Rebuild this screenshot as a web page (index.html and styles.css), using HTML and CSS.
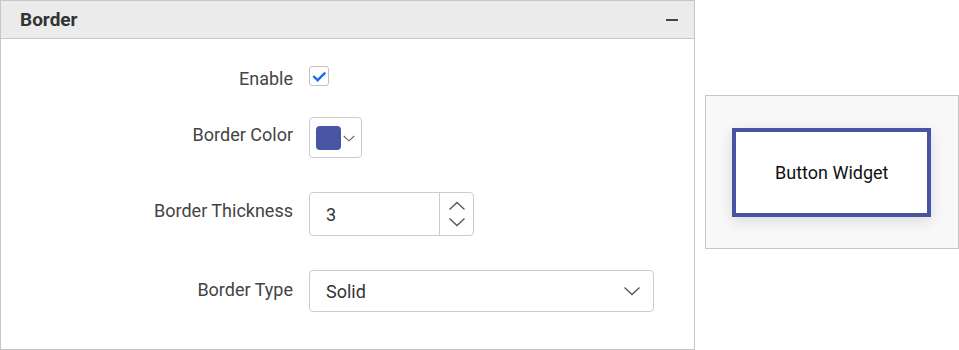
FILE: index.html
```html
<!DOCTYPE html>
<html lang="en">
<head>
    <meta charset="UTF-8">
    <title>Border</title>
    <link rel="stylesheet" href="styles.css">
</head>
<body>
    <div class="page">
        <div class="panel">
            <div class="panel-header">
                <span class="panel-title">Border</span>
                <span class="collapse"></span>
            </div>
            <div class="panel-body">
                <div class="row row-enable">
                    <label class="label">Enable</label>
                    <span class="checkbox">
                        <svg width="18" height="18" viewBox="0 0 18 18"><path d="M3.3 9 L7.6 13.2 L15.3 5.6" fill="none" stroke="#1b6ef3" stroke-width="2.4"/></svg>
                    </span>
                </div>
                <div class="row row-color">
                    <label class="label">Border Color</label>
                    <div class="color-picker">
                        <span class="swatch"></span>
                        <svg class="caret-small" width="12" height="7" viewBox="0 0 12 7"><path d="M0.8 1 L6 5.8 L11.2 1" fill="none" stroke="#666" stroke-width="1.1"/></svg>
                    </div>
                </div>
                <div class="row row-thick">
                    <label class="label">Border Thickness</label>
                    <div class="numeric">
                        <span class="num-value">3</span>
                        <span class="spin">
                            <svg width="18" height="10" viewBox="0 0 18 10"><path d="M1.5 8.5 L9 1.5 L16.5 8.5" fill="none" stroke="#555" stroke-width="1.3"/></svg>
                            <svg width="18" height="10" viewBox="0 0 18 10"><path d="M1.5 1.5 L9 8.5 L16.5 1.5" fill="none" stroke="#555" stroke-width="1.3"/></svg>
                        </span>
                    </div>
                </div>
                <div class="row row-type">
                    <label class="label">Border Type</label>
                    <div class="dropdown">
                        <span class="dd-value">Solid</span>
                        <svg width="18" height="10" viewBox="0 0 18 10"><path d="M1.5 1.5 L9 8.5 L16.5 1.5" fill="none" stroke="#555" stroke-width="1.3"/></svg>
                    </div>
                </div>
            </div>
        </div>

        <div class="preview">
            <div class="widget">Button Widget</div>
        </div>
    </div>
</body>
</html>
```
FILE: styles.css
```css
body {
    margin: 0;
    font-family: Roboto, "Liberation Sans", sans-serif;
    background-color: #fff;
    color: #3b3b3b;
}

.page {
    display: flex;
    align-items: flex-start;
}

/* Panel */
.panel {
    width: 694px;
    height: 348px;
    border: 1px solid #c6c6c6;
    background-color: #fff;
}

.panel-header {
    height: 37px;
    background-color: #ebebeb;
    border-bottom: 1px solid #c6c6c6;
    display: flex;
    align-items: center;
    justify-content: space-between;
    padding: 0 16px 0 19px;
}

.panel-title {
    font-size: 19px;
    font-weight: 700;
    color: #333;
}

.collapse {
    width: 12px;
    height: 2px;
    background-color: #444;
}

.row {
    display: flex;
    align-items: center;
    gap: 16px;
}

.label {
    width: 292px;
    text-align: right;
    font-size: 18px;
    line-height: 18px;
    color: #444;
    position: relative;
}

.row-enable { margin-top: 27px; }
.row-color { margin-top: 31px; }
.row-thick { margin-top: 34px; }
.row-type { margin-top: 34px; }

.row-enable .label { top: 3px; }
.row-color .label { top: -3px; }
.row-thick .label { top: -3px; }
.row-type .label { top: -1px; }

/* Checkbox */
.checkbox {
    width: 18px;
    height: 18px;
    border: 1px solid #c2c2c2;
    border-radius: 3px;
    display: flex;
    align-items: center;
    justify-content: center;
}

/* Color picker */
.color-picker {
    width: 45px;
    height: 39px;
    border: 1px solid #cccccc;
    border-radius: 4px;
    display: flex;
    align-items: center;
    padding-left: 6px;
    gap: 2px;
}

.swatch {
    width: 25px;
    height: 24px;
    border-radius: 4px;
    background-color: #4854a4;
}

.caret-small {
    margin-top: 2px;
}

/* Numeric */
.numeric {
    width: 163px;
    height: 42px;
    border: 1px solid #cccccc;
    border-radius: 4px;
    display: flex;
}

.num-value {
    width: 113px;
    padding-left: 16px;
    border-right: 1px solid #cccccc;
    display: flex;
    align-items: center;
    font-size: 18px;
    color: #333;
}

.spin {
    flex: 1;
    display: flex;
    flex-direction: column;
    align-items: center;
    justify-content: center;
    gap: 6px;
}

/* Dropdown */
.dropdown {
    width: 345px;
    height: 42px;
    border: 1px solid #cccccc;
    border-radius: 4px;
    display: flex;
    align-items: center;
    justify-content: space-between;
    padding: 0 12px 0 16px;
    box-sizing: border-box;
}

.dd-value {
    font-size: 18px;
    color: #333;
}

/* Preview */
.preview {
    margin-left: 10px;
    margin-top: 95px;
    width: 226px;
    height: 120px;
    border: 1px solid #c6c6c6;
    background-color: #f8f8f8;
    padding: 32px 0 0 26px;
}

.widget {
    width: 191px;
    height: 81px;
    border: 4px solid #4953a3;
    background-color: #fff;
    box-shadow: 0 4px 14px rgba(0, 0, 0, 0.12);
    display: flex;
    align-items: center;
    justify-content: center;
    font-size: 18px;
    color: #111;
}
```
